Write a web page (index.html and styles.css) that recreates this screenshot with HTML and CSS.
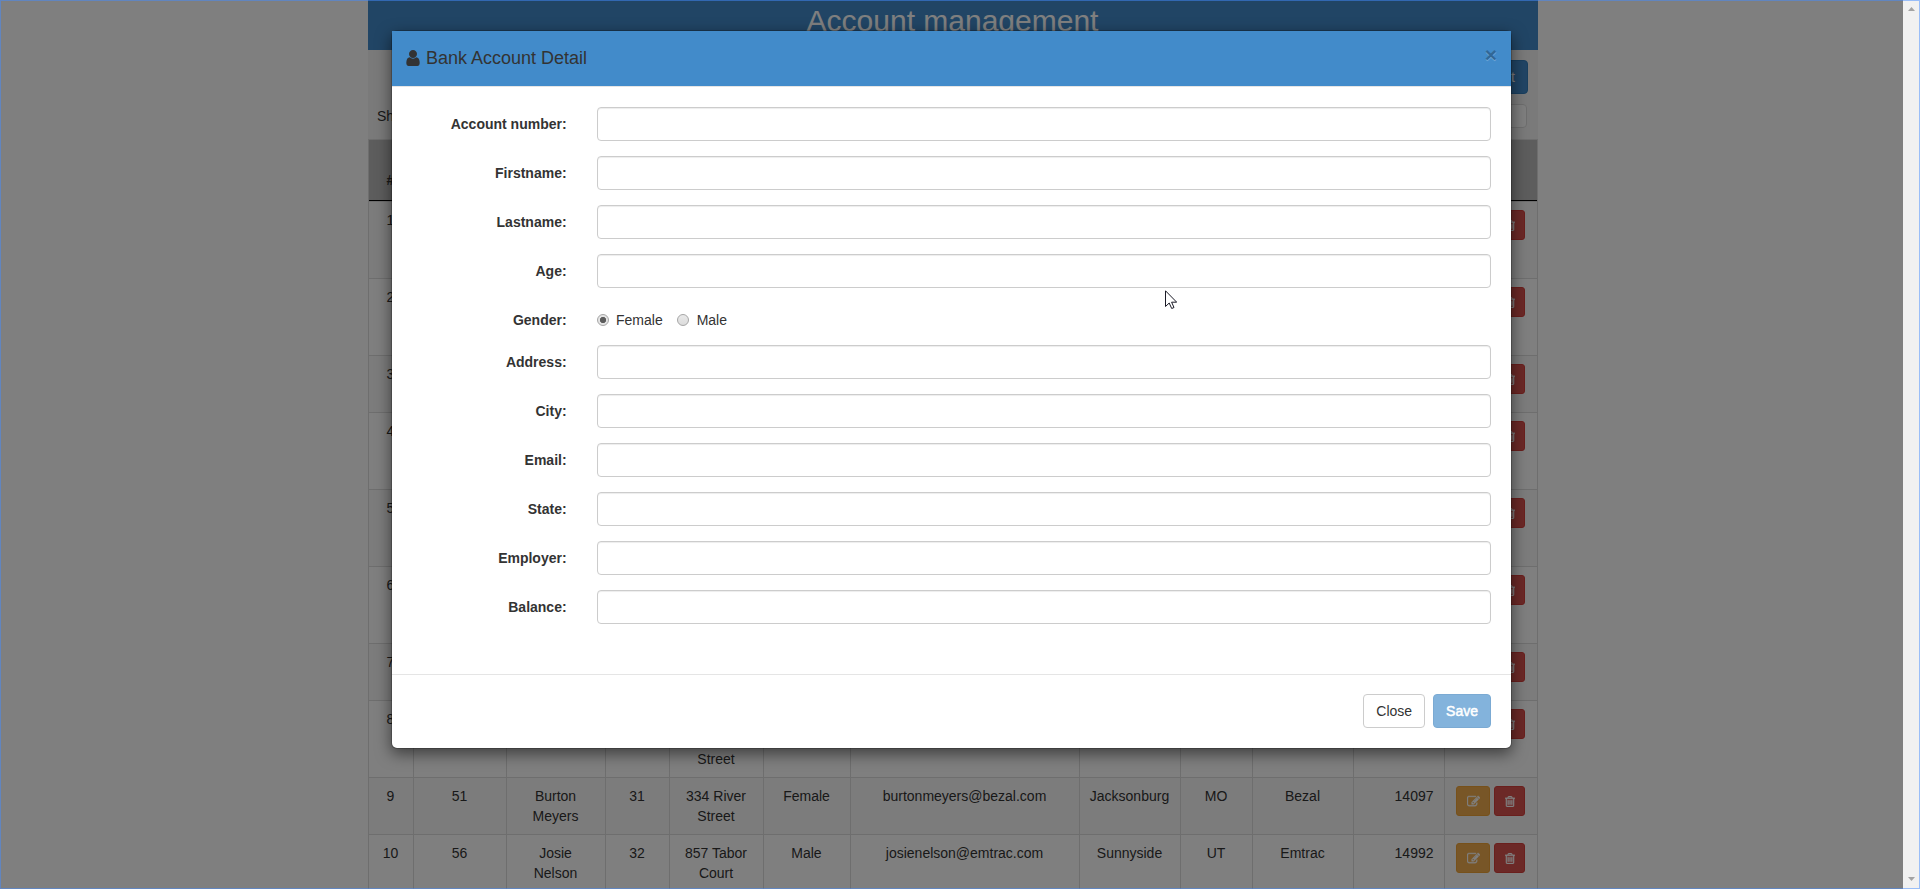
FILE: index.html
```
<!DOCTYPE html>
<html lang="en">
<head>
<meta charset="utf-8">
<title>Account management</title>
<link rel="stylesheet" href="styles.css">
</head>
<body>
<svg class="sprite" aria-hidden="true">
  <symbol id="user" viewBox="0 0 1280 1536"><path d="M1280 1271q0 109-62.500 187t-150.500 78h-854q-88 0-150.500-78t-62.500-187q0-85 8.500-160.500t31.500-152 58.500-131 94-89 134.500-34.500q131 128 313 128t313-128q76 0 134.500 34.500t94 89 58.500 131 31.500 152 8.500 160.500zM1024 384q0 159-112.500 271.500t-271.500 112.500-271.500-112.500-112.500-271.500 112.500-271.500 271.500-112.500 271.500 112.500 112.500 271.500z"/></symbol>
  <symbol id="edit" viewBox="0 0 1792 1792"><path d="M888 1184l116-116-152-152-116 116v56h96v96h56zm440-720q-16-16-33 1l-350 350q-17 17-1 33t33-1l350-350q17-17 1-33zm80 594v190q0 119-84.500 203.500t-203.500 84.500h-832q-119 0-203.500-84.500t-84.500-203.500v-832q0-119 84.500-203.500t203.500-84.500h832q63 0 117 25 15 7 18 23 3 17-9 29l-49 49q-14 14-32 8-23-6-45-6h-832q-66 0-113 47t-47 113v832q0 66 47 113t113 47h832q66 0 113-47t47-113v-126q0-13 9-22l64-64q15-15 35-7t20 29zm-96-738l288 288-672 672h-288v-288zm444 132l-92 92-288-288 92-92q28-28 68-28t68 28l152 152q28 28 28 68t-28 68z"/></symbol>
  <symbol id="trash" viewBox="0 0 1408 1536"><path d="M512 608v576q0 14-9 23t-23 9h-64q-14 0-23-9t-9-23v-576q0-14 9-23t23-9h64q14 0 23 9t9 23zm256 0v576q0 14-9 23t-23 9h-64q-14 0-23-9t-9-23v-576q0-14 9-23t23-9h64q14 0 23 9t9 23zm256 0v576q0 14-9 23t-23 9h-64q-14 0-23-9t-9-23v-576q0-14 9-23t23-9h64q14 0 23 9t9 23zm128 724v-948h-896v948q0 22 7 40.500t14.500 27 10.500 8.500h832q3 0 10.500-8.500t14.500-27 7-40.500zm-672-1076h448l-48-117q-7-9-17-11h-317q-10 2-17 11zm928 32v64q0 14-9 23t-23 9h-96v948q0 83-47 143.500t-113 60.500h-832q-66 0-113-58.500t-47-141.500v-952h-96q-14 0-23-9t-9-23v-64q0-14 9-23t23-9h309l70-167q15-37 54-63t79-26h320q40 0 79 26t54 63l70 167h309q14 0 23 9t9 23z"/></symbol>
</svg>

<div class="container">
  <h2 class="banner">Account management</h2>
  <div class="toolbar">
    <button class="btn btn-primary add">Add account</button>
    <div class="filters"><span>Show</span><input class="search"></div>
  </div>
  <div class="table">
    <div class="row head"><span>#</span><span></span><span></span><span></span><span></span><span></span><span></span><span></span><span></span><span></span><span></span><span></span></div>
    <div class="row tall odd"><span>1</span><span></span><span></span><span></span><span></span><span></span><span></span><span></span><span></span><span></span><span></span><span class="actions"><b class="mini warn"><svg><use href="#edit"/></svg></b><b class="mini danger"><svg><use href="#trash"/></svg></b></span></div>
    <div class="row tall"><span>2</span><span></span><span></span><span></span><span></span><span></span><span></span><span></span><span></span><span></span><span></span><span class="actions"><b class="mini warn"><svg><use href="#edit"/></svg></b><b class="mini danger"><svg><use href="#trash"/></svg></b></span></div>
    <div class="row odd"><span>3</span><span></span><span></span><span></span><span></span><span></span><span></span><span></span><span></span><span></span><span></span><span class="actions"><b class="mini warn"><svg><use href="#edit"/></svg></b><b class="mini danger"><svg><use href="#trash"/></svg></b></span></div>
    <div class="row tall"><span>4</span><span></span><span></span><span></span><span></span><span></span><span></span><span></span><span></span><span></span><span></span><span class="actions"><b class="mini warn"><svg><use href="#edit"/></svg></b><b class="mini danger"><svg><use href="#trash"/></svg></b></span></div>
    <div class="row tall odd"><span>5</span><span></span><span></span><span></span><span></span><span></span><span></span><span></span><span></span><span></span><span></span><span class="actions"><b class="mini warn"><svg><use href="#edit"/></svg></b><b class="mini danger"><svg><use href="#trash"/></svg></b></span></div>
    <div class="row tall"><span>6</span><span></span><span></span><span></span><span></span><span></span><span></span><span></span><span></span><span></span><span></span><span class="actions"><b class="mini warn"><svg><use href="#edit"/></svg></b><b class="mini danger"><svg><use href="#trash"/></svg></b></span></div>
    <div class="row odd"><span>7</span><span></span><span></span><span></span><span></span><span></span><span></span><span></span><span></span><span></span><span></span><span class="actions"><b class="mini warn"><svg><use href="#edit"/></svg></b><b class="mini danger"><svg><use href="#trash"/></svg></b></span></div>
    <div class="row tall"><span>8</span><span></span><span></span><span></span><span class="last-line">Street</span><span></span><span></span><span></span><span></span><span></span><span></span><span class="actions"><b class="mini warn"><svg><use href="#edit"/></svg></b><b class="mini danger"><svg><use href="#trash"/></svg></b></span></div>
    <div class="row odd"><span>9</span><span>51</span><span>Burton<br>Meyers</span><span>31</span><span>334 River<br>Street</span><span>Female</span><span>burtonmeyers@bezal.com</span><span>Jacksonburg</span><span>MO</span><span>Bezal</span><span class="num">14097</span><span class="actions"><b class="mini warn"><svg><use href="#edit"/></svg></b><b class="mini danger"><svg><use href="#trash"/></svg></b></span></div>
    <div class="row"><span>10</span><span>56</span><span>Josie<br>Nelson</span><span>32</span><span>857 Tabor<br>Court</span><span>Male</span><span>josienelson@emtrac.com</span><span>Sunnyside</span><span>UT</span><span>Emtrac</span><span class="num">14992</span><span class="actions"><b class="mini warn"><svg><use href="#edit"/></svg></b><b class="mini danger"><svg><use href="#trash"/></svg></b></span></div>
  </div>
</div>

<div class="backdrop"></div>

<div class="modal">
  <div class="modal-header">
    <h4><svg class="user"><use href="#user"/></svg>Bank Account Detail</h4>
    <span class="close">×</span>
  </div>
  <form class="modal-body">
    <label class="field"><span>Account number:</span><input></label>
    <label class="field"><span>Firstname:</span><input></label>
    <label class="field"><span>Lastname:</span><input></label>
    <label class="field"><span>Age:</span><input></label>
    <div class="field gender"><span>Gender:</span><div class="radios"><i class="radio on"></i><em>Female</em><i class="radio"></i><em>Male</em></div></div>
    <label class="field"><span>Address:</span><input></label>
    <label class="field"><span>City:</span><input></label>
    <label class="field"><span>Email:</span><input></label>
    <label class="field"><span>State:</span><input></label>
    <label class="field"><span>Employer:</span><input></label>
    <label class="field"><span>Balance:</span><input></label>
  </form>
  <div class="modal-footer">
    <button class="btn">Close</button>
    <button class="btn btn-primary save">Save</button>
  </div>
</div>

<div class="scrollbar"><i class="up"></i><i class="down"></i></div>
<svg class="cursor" viewBox="0 0 12 19"><path d="M.5.8V16.500L4.200 13l2.500 5.500 2.300-1L6.600 12.200h5.100z" fill="#fff" stroke="#1a1a26"/></svg>
<div class="frame"></div>
</body>
</html>
```
FILE: styles.css
```
* { box-sizing: border-box; }
html, body { height: 889px; overflow: hidden; }
body {
  margin: 0;
  position: relative;
  background: #fff;
  color: #333;
  font: 14px/20px "Liberation Sans", Arial, sans-serif;
}
.sprite { position: absolute; width: 0; height: 0; }
svg { fill: currentColor; }

.container { width: 1170px; margin-left: 368px; background: #f5f5f5; }
.banner {
  margin: 0;
  height: 50px;
  padding: 4px 1px 0 0;
  background: #428bca;
  color: #fff;
  font-size: 30px;
  font-weight: 400;
  line-height: 33px;
  text-align: center;
}
.toolbar {
  height: 89px;
  padding: 10px 10px 0 9px;
  display: flex;
  flex-direction: column;
  gap: 10px;
}
.add { align-self: flex-end; }
.filters { display: flex; justify-content: space-between; align-items: center; padding-right: 1px; }
.search { width: 180px; height: 24px; border: 1px solid #ddd; border-radius: 4px; background: #fff; }

.btn {
  height: 34px;
  padding: 0 12px;
  border: 1px solid #ccc;
  border-radius: 4px;
  background: #fff;
  color: #333;
  font: 14px/20px "Liberation Sans", Arial, sans-serif;
}
.btn-primary { background: #428bca; border-color: #357ebd; color: #fff; }

.table { border-top: 1px solid #ddd; }
.row {
  display: grid;
  grid-template-columns: 45px 93px 99px 64px 94px 87px 229px 101px 72px 101px 91px 94px;
  height: 57px;
  border-bottom: 1px solid #ddd;
  border-right: 1px solid #ddd;
  background: #fff;
  text-align: center;
}
.row > span { border-left: 1px solid #ddd; padding: 8px 1px 0 0; overflow: hidden; }
.row > .actions { width: 93px; }
.odd { background: #f9f9f9; }
.tall { height: 77px; }
.head { height: 62px; background: #bbb; font-weight: 700; position: relative; }
.head > span { padding-top: 30px; border-left-color: #bbb; }
.head > span:first-child { border-left-color: #ddd; }
.head::after {
  content: "";
  position: absolute;
  left: 1px;
  right: 0;
  bottom: 0;
  height: 1px;
  background: #000;
}
.row > .last-line { padding-top: 48px; }
.row > .num { text-align: right; padding-right: 10.5px; }
.row > .actions { display: flex; gap: 4px; padding-left: 11px; }
.mini {
  display: flex;
  align-items: center;
  justify-content: center;
  flex: none;
  height: 30px;
  border: 1px solid;
  border-radius: 3px;
  color: #fff;
}
.mini svg { width: 13px; height: 13px; fill: #fff; stroke: #fff; stroke-width: 50px; }
.warn { width: 34px; background: #f0ad4e; border-color: #eea236; }
.danger { width: 31px; background: #d9534f; border-color: #d43f3a; }
.danger svg { height: 11px; width: 10px; }

.backdrop { position: absolute; inset: 0; background: rgba(0, 0, 0, .5); }

.modal {
  position: absolute;
  left: 391px;
  top: 30px;
  width: 1121px;
  height: 719px;
  display: flex;
  flex-direction: column;
  border: 1px solid rgba(0, 0, 0, .2);
  border-radius: 6px;
  background: #fff;
  background-clip: padding-box;
  box-shadow: 0 5px 15px rgba(0, 0, 0, .5);
}
.modal-header {
  display: flex;
  justify-content: space-between;
  height: 56px;
  padding: 14px 14px 15px 14px;
  border-bottom: 1px solid #e5e5e5;
  background: #428bca;
}
.modal-header h4 { display: flex; margin: 0; font-size: 18px; font-weight: 400; line-height: 26px; }
.user { width: 14px; height: 16px; margin: 5px 6px 0 0; }
.close {
  font-size: 21px;
  font-weight: 700;
  line-height: 21px;
  color: #000;
  opacity: .25;
  text-shadow: 0 1px 0 #fff;
  margin-top: -1px;
}
.modal-body { flex: 1; padding: 20px; display: flex; flex-direction: column; gap: 15px; }
.field { display: grid; grid-template-columns: 154.600px 894px; column-gap: 30.400px; height: 34px; }
.field > span { padding-top: 7px; text-align: right; font-weight: 700; }
.field input {
  height: 34px;
  border: 1px solid #ccc;
  border-radius: 4px;
  box-shadow: inset 0 1px 1px rgba(0, 0, 0, .075);
}
.gender { height: 27px; }
.radios { display: flex; align-items: center; padding-top: 7px; }
.radios em { font-style: normal; margin: 0 14px 0 7px; }
.radio {
  width: 12px;
  height: 12px;
  border: 1px solid #a6a6a6;
  border-radius: 50%;
  background: linear-gradient(#e9e9e9, #dcdcdc);
}
.radio.on { background: radial-gradient(circle, #5c5c5c 2.800px, #e4e4e4 3.400px); }
.radio + em + .radio + em { margin-left: 8px; }
.modal-footer {
  display: flex;
  justify-content: flex-end;
  gap: 8px;
  height: 74px;
  padding: 19px 20px 20px;
  border-top: 1px solid #e5e5e5;
}
.save { opacity: .65; -webkit-text-stroke: .5px #fff; }

.scrollbar {
  position: absolute;
  top: 0;
  right: 0;
  width: 17px;
  height: 889px;
  padding: 7px 5px 8px;
  display: flex;
  flex-direction: column;
  justify-content: space-between;
  background: #f1f1f1;
}
.scrollbar i { width: 7px; height: 4px; background: #a3a3a3; }
.up { clip-path: polygon(50% 0, 100% 100%, 0 100%); }
.down { clip-path: polygon(0 0, 100% 0, 50% 100%); }
.cursor { position: absolute; left: 1165px; top: 290px; width: 12px; height: 19px; }
.frame { position: absolute; inset: 0; border: 1px solid rgba(68, 140, 255, .5); }
```
